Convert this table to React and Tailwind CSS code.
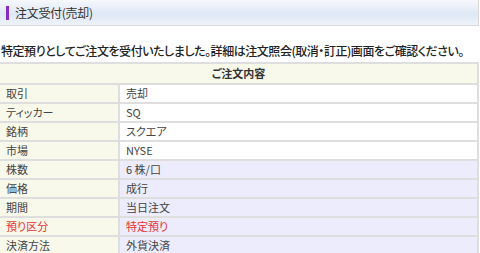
const rows = [
  { label: "取引", value: "売却" },
  { label: "ティッカー", value: "SQ" },
  { label: "銘柄", value: "スクエア" },
  { label: "市場", value: "NYSE" },
  { label: "株数", value: "6 株/口", shade: true },
  { label: "価格", value: "成行", shade: true },
  { label: "期間", value: "当日注文", shade: true },
  { label: "預り区分", value: "特定預り", shade: true, alert: true },
  { label: "決済方法", value: "外貨決済", shade: true },
];

export default function App() {
  return (
    <div className="w-[480px] h-[253px] overflow-hidden bg-white text-[#333] font-['Noto_Sans_CJK_JP','Noto_Sans',sans-serif] [font-feature-settings:'palt']">
      {/* page title bar */}
      <div className="h-[26px] w-[479px] flex items-center border-b border-r border-[#d9d9d9] bg-[linear-gradient(#f6f8fc,#dfe8f6_55%,#eef2f9)]">
        <span className="ml-[6px] w-[3px] h-[14px] bg-[#8a2bc8]" />
        <h1 className="ml-[6px] text-[12px] leading-none tracking-[-0.3px] text-[#333]">注文受付(売却)</h1>
      </div>

      <p className="mt-[19px] ml-px text-[12px] leading-none font-medium tracking-[-0.45px] text-[#222] whitespace-nowrap">
        特定預りとしてご注文を受付いたしました。詳細は注文照会(取消・訂正)画面をご確認ください。
      </p>

      <table className="mt-[5px] w-[479px] border-collapse text-[11px] leading-none text-[#444]">
        <thead>
          <tr className="h-[21px] bg-[#f8f8eb]">
            <th colSpan={2} className="border-t-2 border-b-2 border-r-2 border-[#dedede] font-bold text-center text-[#333]">
              ご注文内容
            </th>
          </tr>
        </thead>
        <tbody>
          {rows.map((r) => (
            <tr key={r.label} className="h-[19px]">
              <td
                className={`w-[119px] pl-[6px] bg-[#f8f8eb] border-b-2 border-r-2 border-[#dedede] ${
                  r.alert ? "text-[#e8322e]" : ""
                }`}
              >
                {r.label}
              </td>
              <td
                className={`pl-[6px] border-b-2 border-r-2 border-[#dedede] ${
                  r.shade ? "bg-[#ececfd]" : "bg-white"
                } ${r.alert ? "text-[#e8322e]" : ""}`}
              >
                {r.value}
              </td>
            </tr>
          ))}
        </tbody>
      </table>
    </div>
  );
}
